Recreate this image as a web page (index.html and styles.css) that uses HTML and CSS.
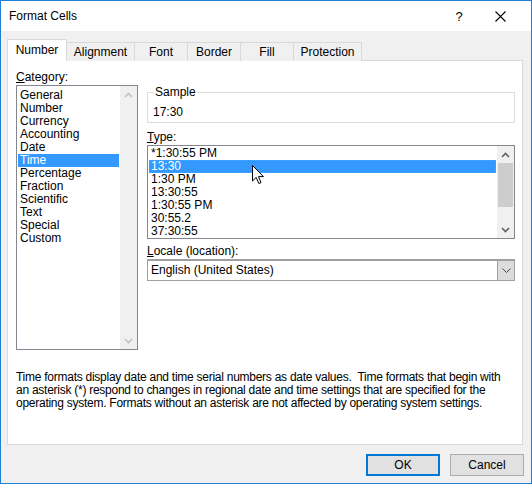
FILE: index.html
```html
<!DOCTYPE html>
<html lang="en">
<head>
    <meta charset="UTF-8">
    <title>Format Cells</title>
    <link rel="stylesheet" href="styles.css">
</head>
<body>

<div class="window">
    <div class="titlebar">
        <span class="title">Format Cells</span>
        <span class="help">?</span>
        <span class="close">
            <svg width="11" height="11" viewBox="0 0 11 11"><path d="M0.5 0.5 L10.5 10.5 M10.5 0.5 L0.5 10.5" stroke="#000" stroke-width="1.1" fill="none"/></svg>
        </span>
    </div>

    <div class="tabs">
        <div class="tab active w-number">Number</div>
        <div class="tab w-align">Alignment</div>
        <div class="tab w-small">Font</div>
        <div class="tab w-small">Border</div>
        <div class="tab w-small">Fill</div>
        <div class="tab w-align">Protection</div>
    </div>

    <div class="panel">
        <div class="columns">
            <div class="col-left">
                <div class="label"><u>C</u>ategory:</div>
                <div class="listbox category">
                    <ul class="items">
                        <li>General</li>
                        <li>Number</li>
                        <li>Currency</li>
                        <li>Accounting</li>
                        <li>Date</li>
                        <li class="selected">Time</li>
                        <li>Percentage</li>
                        <li>Fraction</li>
                        <li>Scientific</li>
                        <li>Text</li>
                        <li>Special</li>
                        <li>Custom</li>
                    </ul>
                    <div class="scrollbar disabled">
                        <div class="arrow"><svg width="9" height="6" viewBox="0 0 9 6"><polyline points="1,5 4.5,1.5 8,5" fill="none" stroke="#c2c2c2" stroke-width="1.6"/></svg></div>
                        <div class="track"></div>
                        <div class="arrow"><svg width="9" height="6" viewBox="0 0 9 6"><polyline points="1,1 4.5,4.5 8,1" fill="none" stroke="#c2c2c2" stroke-width="1.6"/></svg></div>
                    </div>
                </div>
            </div>

            <div class="col-right">
                <fieldset class="sample">
                    <legend>Sample</legend>
                    <div class="sample-value">17:30</div>
                </fieldset>

                <div class="label type-label"><u>T</u>ype:</div>
                <div class="listbox type">
                    <ul class="items">
                        <li>*1:30:55 PM</li>
                        <li class="selected focused">13:30</li>
                        <li>1:30 PM</li>
                        <li>13:30:55</li>
                        <li>1:30:55 PM</li>
                        <li>30:55.2</li>
                        <li>37:30:55</li>
                    </ul>
                    <div class="scrollbar">
                        <div class="arrow"><svg width="9" height="6" viewBox="0 0 9 6"><polyline points="1,5 4.5,1.5 8,5" fill="none" stroke="#606060" stroke-width="1.6"/></svg></div>
                        <div class="thumb"></div>
                        <div class="track"></div>
                        <div class="arrow"><svg width="9" height="6" viewBox="0 0 9 6"><polyline points="1,1 4.5,4.5 8,1" fill="none" stroke="#606060" stroke-width="1.6"/></svg></div>
                    </div>
                </div>

                <div class="label locale-label"><u>L</u>ocale (location):</div>
                <div class="combo">
                    <span class="combo-text">English (United States)</span>
                    <span class="combo-btn">
                        <svg width="9" height="5" viewBox="0 0 9 5"><polyline points="0.5,0.5 4.5,4.5 8.5,0.5" fill="none" stroke="#444" stroke-width="1"/></svg>
                    </span>
                </div>
            </div>
        </div>

        <p class="desc">Time formats display date and time serial numbers as date values.&nbsp; Time formats that begin with<br>an asterisk (*) respond to changes in regional date and time settings that are specified for the<br>operating system. Formats without an asterisk are not affected by operating system settings.</p>
    </div>

    <div class="buttons">
        <button class="btn primary">OK</button>
        <button class="btn">Cancel</button>
    </div>

    <!-- mouse pointer over the Type list -->
    <svg class="cursor" width="13" height="20" viewBox="0 0 13 20">
        <path d="M0.5 0.5 L0.5 16 L4.2 12.4 L6.8 18.5 L9 17.6 L6.5 11.6 L11.5 11.6 Z" fill="#fff" stroke="#000" stroke-width="1"/>
    </svg>
</div>

</body>
</html>
```

FILE: styles.css
```css
body {
    margin: 0;
    padding: 0;
    font-family: "Liberation Sans", Arial, sans-serif;
    font-size: 12px;
    color: #000;
}

.window {
    position: relative;
    width: 532px;
    height: 484px;
    box-sizing: border-box;
    border: 1px solid #1f7fd6;
    background-color: #f0f0f0;
}

.titlebar {
    height: 30px;
    background-color: #fff;
    display: flex;
    align-items: center;
    padding-left: 8px;
    padding-right: 8px;
}

.title {
    font-size: 12px;
}

.help {
    margin-left: auto;
    width: 30px;
    margin-right: 3px;
    text-align: center;
    font-size: 13px;
}

.close {
    width: 46px;
    display: flex;
    justify-content: center;
}

/* tab strip */
.tabs {
    display: flex;
    align-items: flex-end;
    padding: 7px 0 0 6px;
    height: 22px;
    position: relative;
    z-index: 1;
}

.tab {
    box-sizing: border-box;
    height: 19px;
    line-height: 19px;
    border: 1px solid #d9d9d9;
    border-bottom: none;
    background-color: #f0f0f0;
    text-align: center;
    margin-left: -1px;
    margin-bottom: -1px;
}

.tab.active {
    height: 22px;
    line-height: 21px;
    background-color: #fff;
    margin-left: 0;
    position: relative;
    z-index: 2;
}

.w-number { width: 60px; }
.w-align { width: 69px; }
.w-small { width: 54px; }

/* white page under the tabs */
.panel {
    box-sizing: border-box;
    height: 385px;
    margin: 0 8px 0 6px;
    padding: 8px 0 0 8px;
    background-color: #fff;
    border: 1px solid #d9d9d9;
}

.columns {
    display: flex;
    gap: 9px;
}

.col-left {
    width: 122px;
}

.col-right {
    width: 368px;
}

.label {
    height: 16px;
    line-height: 16px;
}

.listbox {
    box-sizing: border-box;
    border: 1px solid #828790;
    display: flex;
    background-color: #fff;
}

.listbox.category {
    height: 265px;
}

.listbox.type {
    height: 94px;
}

.items {
    list-style: none;
    margin: 0;
    padding: 3px 1px 0 1px;
    flex: 1;
}

.listbox.type .items {
    padding-top: 1px;
}

.items li {
    height: 13px;
    line-height: 13px;
    padding-left: 2px;
    white-space: nowrap;
}

.items li.selected {
    background-color: #3399ff;
    color: #fff;
}

.items li.focused {
    outline: 1px dotted #d08a3c;
    outline-offset: -1px;
}

.scrollbar {
    width: 17px;
    display: flex;
    flex-direction: column;
    background-color: #f0f0f0;
}

.scrollbar .arrow {
    height: 17px;
    display: flex;
    align-items: center;
    justify-content: center;
}

.scrollbar .track {
    flex: 1;
}

.scrollbar .thumb {
    height: 44px;
    margin: 0 1px;
    background-color: #cdcdcd;
}

/* Sample group box */
.sample {
    margin: 17px 0 0 0;
    padding: 7px 5px 3px 5px;
    border: 1px solid #dcdcdc;
    min-width: 0;
}

.sample legend {
    padding: 0 1px;
    margin-left: 1px;
    line-height: 13px;
}

.sample-value {
    line-height: 13px;
    height: 13px;
}

.type-label {
    margin-top: 6px;
}

.locale-label {
    margin-top: 4px;
}

.combo {
    box-sizing: border-box;
    height: 22px;
    border: 1px solid #a0a0a0;
    border-top-width: 2px;
    display: flex;
    align-items: stretch;
}

.combo-text {
    flex: 1;
    line-height: 19px;
    padding-left: 3px;
}

.combo-btn {
    width: 16px;
    background-color: #dcdcdc;
    border-left: 1px solid #a0a0a0;
    display: flex;
    align-items: center;
    justify-content: center;
}

.desc {
    margin: 21px 0 0 0;
    line-height: 13px;
    letter-spacing: -0.26px;
    white-space: nowrap;
}

/* OK / Cancel */
.buttons {
    display: flex;
    justify-content: flex-end;
    gap: 10px;
    padding: 9px 7px 0 0;
}

.btn {
    box-sizing: border-box;
    width: 74px;
    height: 22px;
    font-family: "Liberation Sans", Arial, sans-serif;
    font-size: 12px;
    color: #000;
    background-color: #e1e1e1;
    border: 1px solid #adadad;
    padding: 0;
}

.btn.primary {
    border: 2px solid #0078d7;
}

.cursor {
    position: absolute;
    left: 251px;
    top: 164px;
}
```
